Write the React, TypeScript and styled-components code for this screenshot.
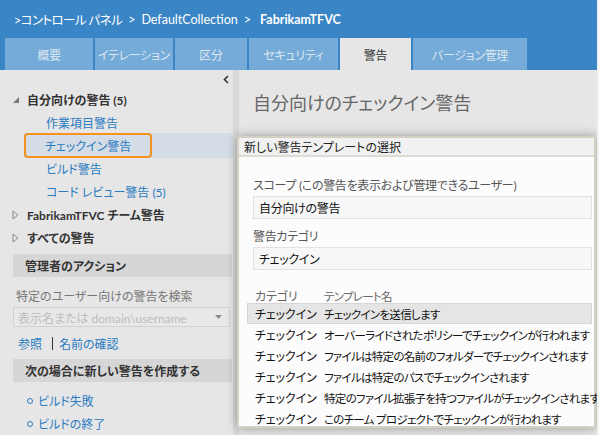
import styled, { createGlobalStyle } from "styled-components";

const GlobalStyle = createGlobalStyle`
  body {
    margin: 0;
    background: #e6e6e6;
    font-family: Lato, "Noto Sans CJK JP", sans-serif;
    font-feature-settings: "palt";
  }
`;

const Page = styled.div`
  position: relative;
  width: 599px;
  height: 435px;
  overflow: hidden;
  display: flex;
  flex-direction: column;
  background: #e6e6e6;
  box-sizing: border-box;
  border-right: 2px solid #f2f2f2;
`;

const Header = styled.header`
  background: #3a85c5;
  height: 70px;
  display: flex;
  flex-direction: column;
`;

const Breadcrumb = styled.div`
  height: 38px;
  display: flex;
  align-items: center;
  gap: 6px;
  padding-left: 14px;
  color: #fff;
  font-size: 12.5px;
  white-space: pre;
`;

const Crumb = styled.span<{ $tight?: boolean }>`
  letter-spacing: ${(p) => (p.$tight ? "-0.6px" : "0")};
`;

const Current = styled.span`
  font-weight: 700;
  margin-left: 3px;
`;

const TabBar = styled.nav`
  display: flex;
  gap: 2px;
  padding-left: 5px;
  height: 32px;
`;

const Tab = styled.div<{ $w: number; $active?: boolean }>`
  width: ${(p) => p.$w}px;
  display: flex;
  align-items: center;
  justify-content: center;
  font-size: 12px;
  letter-spacing: -0.3px;
  background: ${(p) => (p.$active ? "#e6e6e6" : "#74abd8")};
  color: ${(p) => (p.$active ? "#333" : "#dde7f0")};
`;

const Body = styled.div`
  flex: 1;
  display: grid;
  grid-template-columns: 233px 6px 1fr;
`;

const LeftPanel = styled.aside`
  display: flex;
  flex-direction: column;
`;

const CollapseRow = styled.div`
  height: 17px;
  display: flex;
  justify-content: flex-end;
  align-items: center;
  padding-right: 4px;
  padding-top: 1px;
`;

const TreeRow = styled.div<{ $indent: number }>`
  height: 23px;
  display: flex;
  align-items: center;
  padding-left: ${(p) => p.$indent}px;
  font-size: 12px;
`;

const Toggle = styled.span`
  width: 15px;
  display: flex;
  align-items: center;
`;

const GroupLabel = styled.span`
  color: #333;
  font-weight: 700;
`;

const Link = styled.span`
  color: #2a7bc2;
  font-size: 12px;
`;

const SelectedRow = styled.div`
  height: 25px;
  margin: -1px 0 -1px 24px;
  background: #d4dce6;
  display: flex;
`;

const Highlight = styled.div`
  border: 2px solid #f7921e;
  border-radius: 4px;
  padding: 0 19px;
  display: flex;
  align-items: center;
  font-size: 12px;
  color: #2a7bc2;
`;

const SectionBand = styled.div<{ $top: number }>`
  margin: ${(p) => p.$top}px 1px 0 13px;
  height: 23px;
  background: #d6d6d6;
  display: flex;
  align-items: center;
  padding-left: 12px;
  font-size: 12px;
  font-weight: 700;
  color: #333;
`;

const FieldLabel = styled.div`
  margin: 11px 0 0 16px;
  line-height: 18px;
  font-size: 12px;
  color: #777;
`;

const Combo = styled.div`
  margin: 1px 3px 0 13px;
  height: 20px;
  box-sizing: border-box;
  border: 1px solid #d2d2d2;
  background: #e8e8e8;
  display: flex;
  align-items: center;
  justify-content: space-between;
  padding: 0 7px 0 4px;
  font-size: 12px;
  color: #bdbdbd;
`;

const LinkRow = styled.div`
  margin: 7px 0 0 18px;
  height: 18px;
  display: flex;
  align-items: center;
  gap: 6px;
`;

const Pipe = styled.span`
  width: 1px;
  height: 13px;
  background: #333;
  margin-left: 4px;
`;

const BulletGap = styled.div`
  height: 7px;
`;

const BulletRow = styled.div`
  height: 23px;
  display: flex;
  align-items: center;
  padding-left: 27px;
  gap: 5px;
`;

const Bullet = styled.span`
  width: 4px;
  height: 4px;
  border: 1px solid #2a7bc2;
  border-radius: 50%;
`;

const Divider = styled.div`
  background: #d9d9d9;
`;

const RightPanel = styled.main`
  padding: 13px 0 0 14px;
`;

const Title = styled.h1`
  margin: 0;
  font-size: 18px;
  font-weight: 400;
  line-height: 40px;
  color: #666;
`;

const Dialog = styled.section`
  position: absolute;
  left: 237px;
  top: 136px;
  width: 359px;
  height: 292px;
  box-sizing: border-box;
  border: 2px solid #d4d1c4;
  background: #fcfcfc;
  box-shadow: 0 0 10px rgba(0, 0, 0, 0.35);
  display: flex;
  flex-direction: column;
`;

const DialogHeader = styled.div`
  height: 25px;
  background: #f1f1f1;
  border-bottom: 2px solid #dcdcd4;
  display: flex;
  align-items: center;
  padding-left: 5px;
  font-size: 12px;
  color: #222;
`;

const DialogBody = styled.div`
  padding: 20px 2px 0 8px;
  display: flex;
  flex-direction: column;
  letter-spacing: -0.3px;
`;

const DialogLabel = styled.div<{ $top?: number }>`
  margin: ${(p) => p.$top ?? 0}px 0 0 6px;
  line-height: 18px;
  font-size: 12px;
  color: #555;
`;

const TextBox = styled.div`
  margin: 1px 0 0 6px;
  height: 23px;
  box-sizing: border-box;
  border: 1px solid #e2e2e2;
  background: #f7f7f7;
  display: flex;
  align-items: center;
  padding-left: 5px;
  font-size: 12px;
  color: #111;
`;

const Table = styled.div`
  margin-top: 16px;
  display: flex;
  flex-direction: column;
`;

const TableRow = styled.div<{ $head?: boolean; $selected?: boolean }>`
  height: ${(p) => (p.$head ? 17 : 21)}px;
  box-sizing: border-box;
  display: grid;
  grid-template-columns: 69px 1fr;
  align-items: center;
  padding-left: 7px;
  font-size: 11.5px;
  letter-spacing: -0.7px;
  white-space: nowrap;
  color: ${(p) => (p.$head ? "#666" : "#111")};
  background: ${(p) => (p.$selected ? "#e5e5e5" : "transparent")};
  border: 1px solid ${(p) => (p.$selected ? "#d6d6d6" : "transparent")};
`;

const Category = styled.span`
  font-size: 12px;
  letter-spacing: -0.1px;
`;

const ExpandedIcon = () => (
  <svg width="8" height="8" viewBox="0 0 8 8">
    <polygon points="7,1 7,7 1,7" fill="#7a7a7a" />
  </svg>
);

const CollapsedIcon = () => (
  <svg width="7" height="10" viewBox="0 0 7 10">
    <polygon points="1,1 6,5 1,9" fill="none" stroke="#8a8a8a" strokeWidth="1" />
  </svg>
);

const templates = [
  "チェックインを送信します",
  "オーバーライドされたポリシーでチェックインが行われます",
  "ファイルは特定の名前のフォルダーでチェックインされます",
  "ファイルは特定のパスでチェックインされます",
  "特定のファイル拡張子を持つファイルがチェックインされます",
  "このチーム プロジェクトでチェックインが行われます",
];

const tabs = [
  { label: "概要", w: 88 },
  { label: "イテレーション", w: 78 },
  { label: "区分", w: 72 },
  { label: "セキュリティ", w: 89 },
  { label: "警告", w: 71, active: true },
  { label: "バージョン管理", w: 114 },
];

export default function App() {
  return (
    <>
      <GlobalStyle />
      <Page>
        <Header>
          <Breadcrumb>
            <Crumb $tight>&gt;コントロール パネル</Crumb>
            <Crumb>&gt;</Crumb>
            <Crumb>DefaultCollection</Crumb>
            <Crumb>&gt;</Crumb>
            <Current>FabrikamTFVC</Current>
          </Breadcrumb>
          <TabBar>
            {tabs.map((t) => (
              <Tab key={t.label} $w={t.w} $active={t.active}>
                {t.label}
              </Tab>
            ))}
          </TabBar>
        </Header>

        <Body>
          <LeftPanel>
            <CollapseRow>
              <svg width="6" height="9" viewBox="0 0 6 9">
                <polyline points="5,1 1.5,4.5 5,8" fill="none" stroke="#333" strokeWidth="1.6" />
              </svg>
            </CollapseRow>
            <TreeRow $indent={12}>
              <Toggle>
                <ExpandedIcon />
              </Toggle>
              <GroupLabel>自分向けの警告 (5)</GroupLabel>
            </TreeRow>
            <TreeRow $indent={46}>
              <Link>作業項目警告</Link>
            </TreeRow>
            <SelectedRow>
              <Highlight>チェックイン警告</Highlight>
            </SelectedRow>
            <TreeRow $indent={46}>
              <Link>ビルド警告</Link>
            </TreeRow>
            <TreeRow $indent={46}>
              <Link>コード レビュー警告 (5)</Link>
            </TreeRow>
            <TreeRow $indent={12}>
              <Toggle>
                <CollapsedIcon />
              </Toggle>
              <GroupLabel>FabrikamTFVC チーム警告</GroupLabel>
            </TreeRow>
            <TreeRow $indent={12}>
              <Toggle>
                <CollapsedIcon />
              </Toggle>
              <GroupLabel>すべての警告</GroupLabel>
            </TreeRow>

            <SectionBand $top={5}>管理者のアクション</SectionBand>
            <FieldLabel>特定のユーザー向けの警告を検索</FieldLabel>
            <Combo>
              表示名または domain\username
              <svg width="7" height="4" viewBox="0 0 7 4">
                <polygon points="0,0 7,0 3.5,4" fill="#8a8a8a" />
              </svg>
            </Combo>
            <LinkRow>
              <Link>参照</Link>
              <Pipe />
              <Link>名前の確認</Link>
            </LinkRow>

            <SectionBand $top={7}>次の場合に新しい警告を作成する</SectionBand>
            <BulletGap />
            <BulletRow>
              <Bullet />
              <Link>ビルド失敗</Link>
            </BulletRow>
            <BulletRow>
              <Bullet />
              <Link>ビルドの終了</Link>
            </BulletRow>
          </LeftPanel>

          <Divider />

          <RightPanel>
            <Title>自分向けのチェックイン警告</Title>
          </RightPanel>
        </Body>

        <Dialog>
          <DialogHeader>新しい警告テンプレートの選択</DialogHeader>
          <DialogBody>
            <DialogLabel>スコープ (この警告を表示および管理できるユーザー)</DialogLabel>
            <TextBox>自分向けの警告</TextBox>
            <DialogLabel $top={9}>警告カテゴリ</DialogLabel>
            <TextBox>チェックイン</TextBox>
            <Table>
              <TableRow $head>
                <Category>カテゴリ</Category>
                <span>テンプレート名</span>
              </TableRow>
              {templates.map((t, i) => (
                <TableRow key={t} $selected={i === 0}>
                  <Category>チェックイン</Category>
                  <span>{t}</span>
                </TableRow>
              ))}
            </Table>
          </DialogBody>
        </Dialog>
      </Page>
    </>
  );
}
